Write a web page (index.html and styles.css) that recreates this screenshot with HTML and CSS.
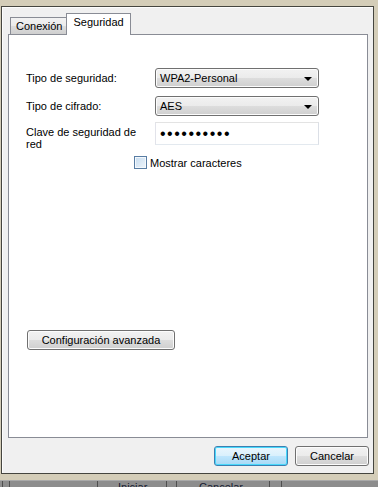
FILE: index.html
```html
<!DOCTYPE html>
<html lang="es">
<head>
<meta charset="UTF-8">
<title>Propiedades de la red inalámbrica</title>
<link rel="stylesheet" href="styles.css">
</head>
<body>
<!-- ventana -->
<div class="window">
<div class="tabs">
<div class="tab">Conexión</div>
<div class="tab active">Seguridad</div>
</div>

<div class="panel">
<div class="form">
<label class="label">Tipo de seguridad:</label>
<div class="select">WPA2-Personal<span class="arrow"></span></div>

<label class="label row2">Tipo de cifrado:</label>
<div class="select row2">AES<span class="arrow"></span></div>

<label class="label label-top">Clave de seguridad de red</label>
<div class="field"><span class="dots">••••••••••</span></div>

<div class="check-row">
<span class="checkbox"></span>
<span>Mostrar caracteres</span>
</div>
</div>

<button class="btn btn-wide">Configuración avanzada</button>
</div>

<!-- botones -->
<div class="footer">
<button class="btn btn-default">Aceptar</button>
<button class="btn">Cancelar</button>
</div>
</div>

<!-- barra de detrás -->
<div class="taskbar">
<span class="cell c1"></span>
<span class="cell c2"></span>
<span class="cell c3"></span>
<span class="cell c4">Iniciar</span>
<span class="cell c5"></span>
<span class="cell c6">Cancelar</span>
<span class="cell c7"></span>
</div>
</body>
</html>
```

FILE: styles.css
```css
/* fondo detrás de la ventana */
body {
margin: 0;
width: 378px;
height: 487px;
overflow: hidden;
background-color: #d4cdb8;
font-family: "Liberation Sans", Arial, sans-serif;
font-size: 11px;
color: #000;
display: flex;
flex-direction: column;
}

/* ventana */
.window {
margin: 6px 4px 0 1px;
height: 467px;
border: 1px solid #45453f;
background-color: #f0f0f0;
padding: 7px 5px 0 6px;
display: flex;
flex-direction: column;
box-shadow: inset 1px 1px 0 #fdfdfd;
}

/* pestañas */
.tabs {
display: flex;
align-items: flex-end;
height: 20px;
padding-left: 2px;
}

.tab {
height: 16px;
padding: 0 4px 0 5px;
line-height: 17px;
border: 1px solid #898c95;
border-bottom: none;
background: linear-gradient(#f2f2f2, #ebebeb 50%, #dddddd 51%, #cfcfcf);
margin-right: -1px;
}

.tab.active {
position: relative;
height: 21px;
line-height: 17px;
padding: 0 6px 0 6px;
background: #fff;
margin-bottom: -1px;
z-index: 1;
}

/* panel blanco */
.panel {
border: 1px solid #898c95;
background-color: #fff;
display: flex;
flex-direction: column;
padding: 33px 0 87px 0;
box-sizing: border-box;
height: 404px;
}

.form {
display: grid;
grid-template-columns: 129px 164px;
padding-left: 17px;
align-items: center;
}

.row2 {
margin-top: 8px;
}

.label-top {
align-self: start;
margin-top: 10px;
margin-bottom: -5px;
width: 118px;
line-height: 12px;
}

/* desplegables */
.select {
position: relative;
height: 18px;
line-height: 18px;
padding-left: 4px;
border: 1px solid #707070;
border-radius: 3px;
background: linear-gradient(#f2f2f2, #ebebeb 50%, #dddddd 51%, #cfcfcf);
box-shadow: inset 0 0 0 1px #fcfcfc;
}

.select.row2 {
height: 18px;
}

.arrow {
position: absolute;
right: 6px;
top: 8px;
border-left: 4px solid transparent;
border-right: 4px solid transparent;
border-top: 4px solid #000;
}

/* campo de clave */
.field {
align-self: start;
height: 21px;
margin-top: 6px;
border: 1px solid #abadb3;
border-top-color: #e3e3e3;
border-left-color: #e2e3ea;
border-right-color: #dbdfe6;
border-bottom-color: #e3e9ef;
padding-left: 4px;
display: flex;
align-items: center;
}

.dots {
font-size: 16px;
letter-spacing: 1.5px;
line-height: 12px;
}

/* casilla */
.check-row {
grid-column: 1 / -1;
display: flex;
align-items: center;
gap: 3px;
padding-left: 108px;
margin-top: 11px;
}

.checkbox {
width: 11px;
height: 11px;
border: 1px solid #587da4;
background: linear-gradient(135deg, #c6dcf0, #eef5fb);
box-shadow: inset 0 0 0 1px #f4f8fc;
}

/* botones */
.btn {
height: 20px;
border: 1px solid #707070;
border-radius: 3px;
background: linear-gradient(#f2f2f2, #ebebeb 50%, #dddddd 51%, #cfcfcf);
box-shadow: inset 0 0 0 1px #fcfcfc;
font-family: "Liberation Sans", Arial, sans-serif;
font-size: 11px;
color: #000;
padding: 0;
width: 74px;
}

.btn-wide {
width: 148px;
margin-top: auto;
margin-left: 18px;
}

.btn-default {
border-color: #3c7fb1;
box-shadow: inset 0 0 0 1px #48d8fb;
background: linear-gradient(#eaf6fd, #d9f0fc 50%, #bee6fd 51%, #a7d9f5);
}

.footer {
display: flex;
justify-content: flex-end;
gap: 7px;
margin-top: 8px;
margin-right: -1px;
}

/* barra de tareas detrás */
.taskbar {
margin-top: 6px;
height: 6px;
display: flex;
background-color: #8d8d8d;
border-top: 1px solid #a9a9a9;
overflow: hidden;
}

.cell {
height: 14px;
border-right: 1px solid #4e4e4e;
color: #141a30;
font-size: 11px;
line-height: 12px;
}

.c1 { width: 2px; }
.c2 { width: 6px; }
.c3 { width: 87px; }
.c4 { width: 69px; padding-left: 20px; box-sizing: border-box; }
.c5 { width: 9px; }
.c6 { width: 70px; padding-left: 22px; }
.c7 { width: 11px; }
```
